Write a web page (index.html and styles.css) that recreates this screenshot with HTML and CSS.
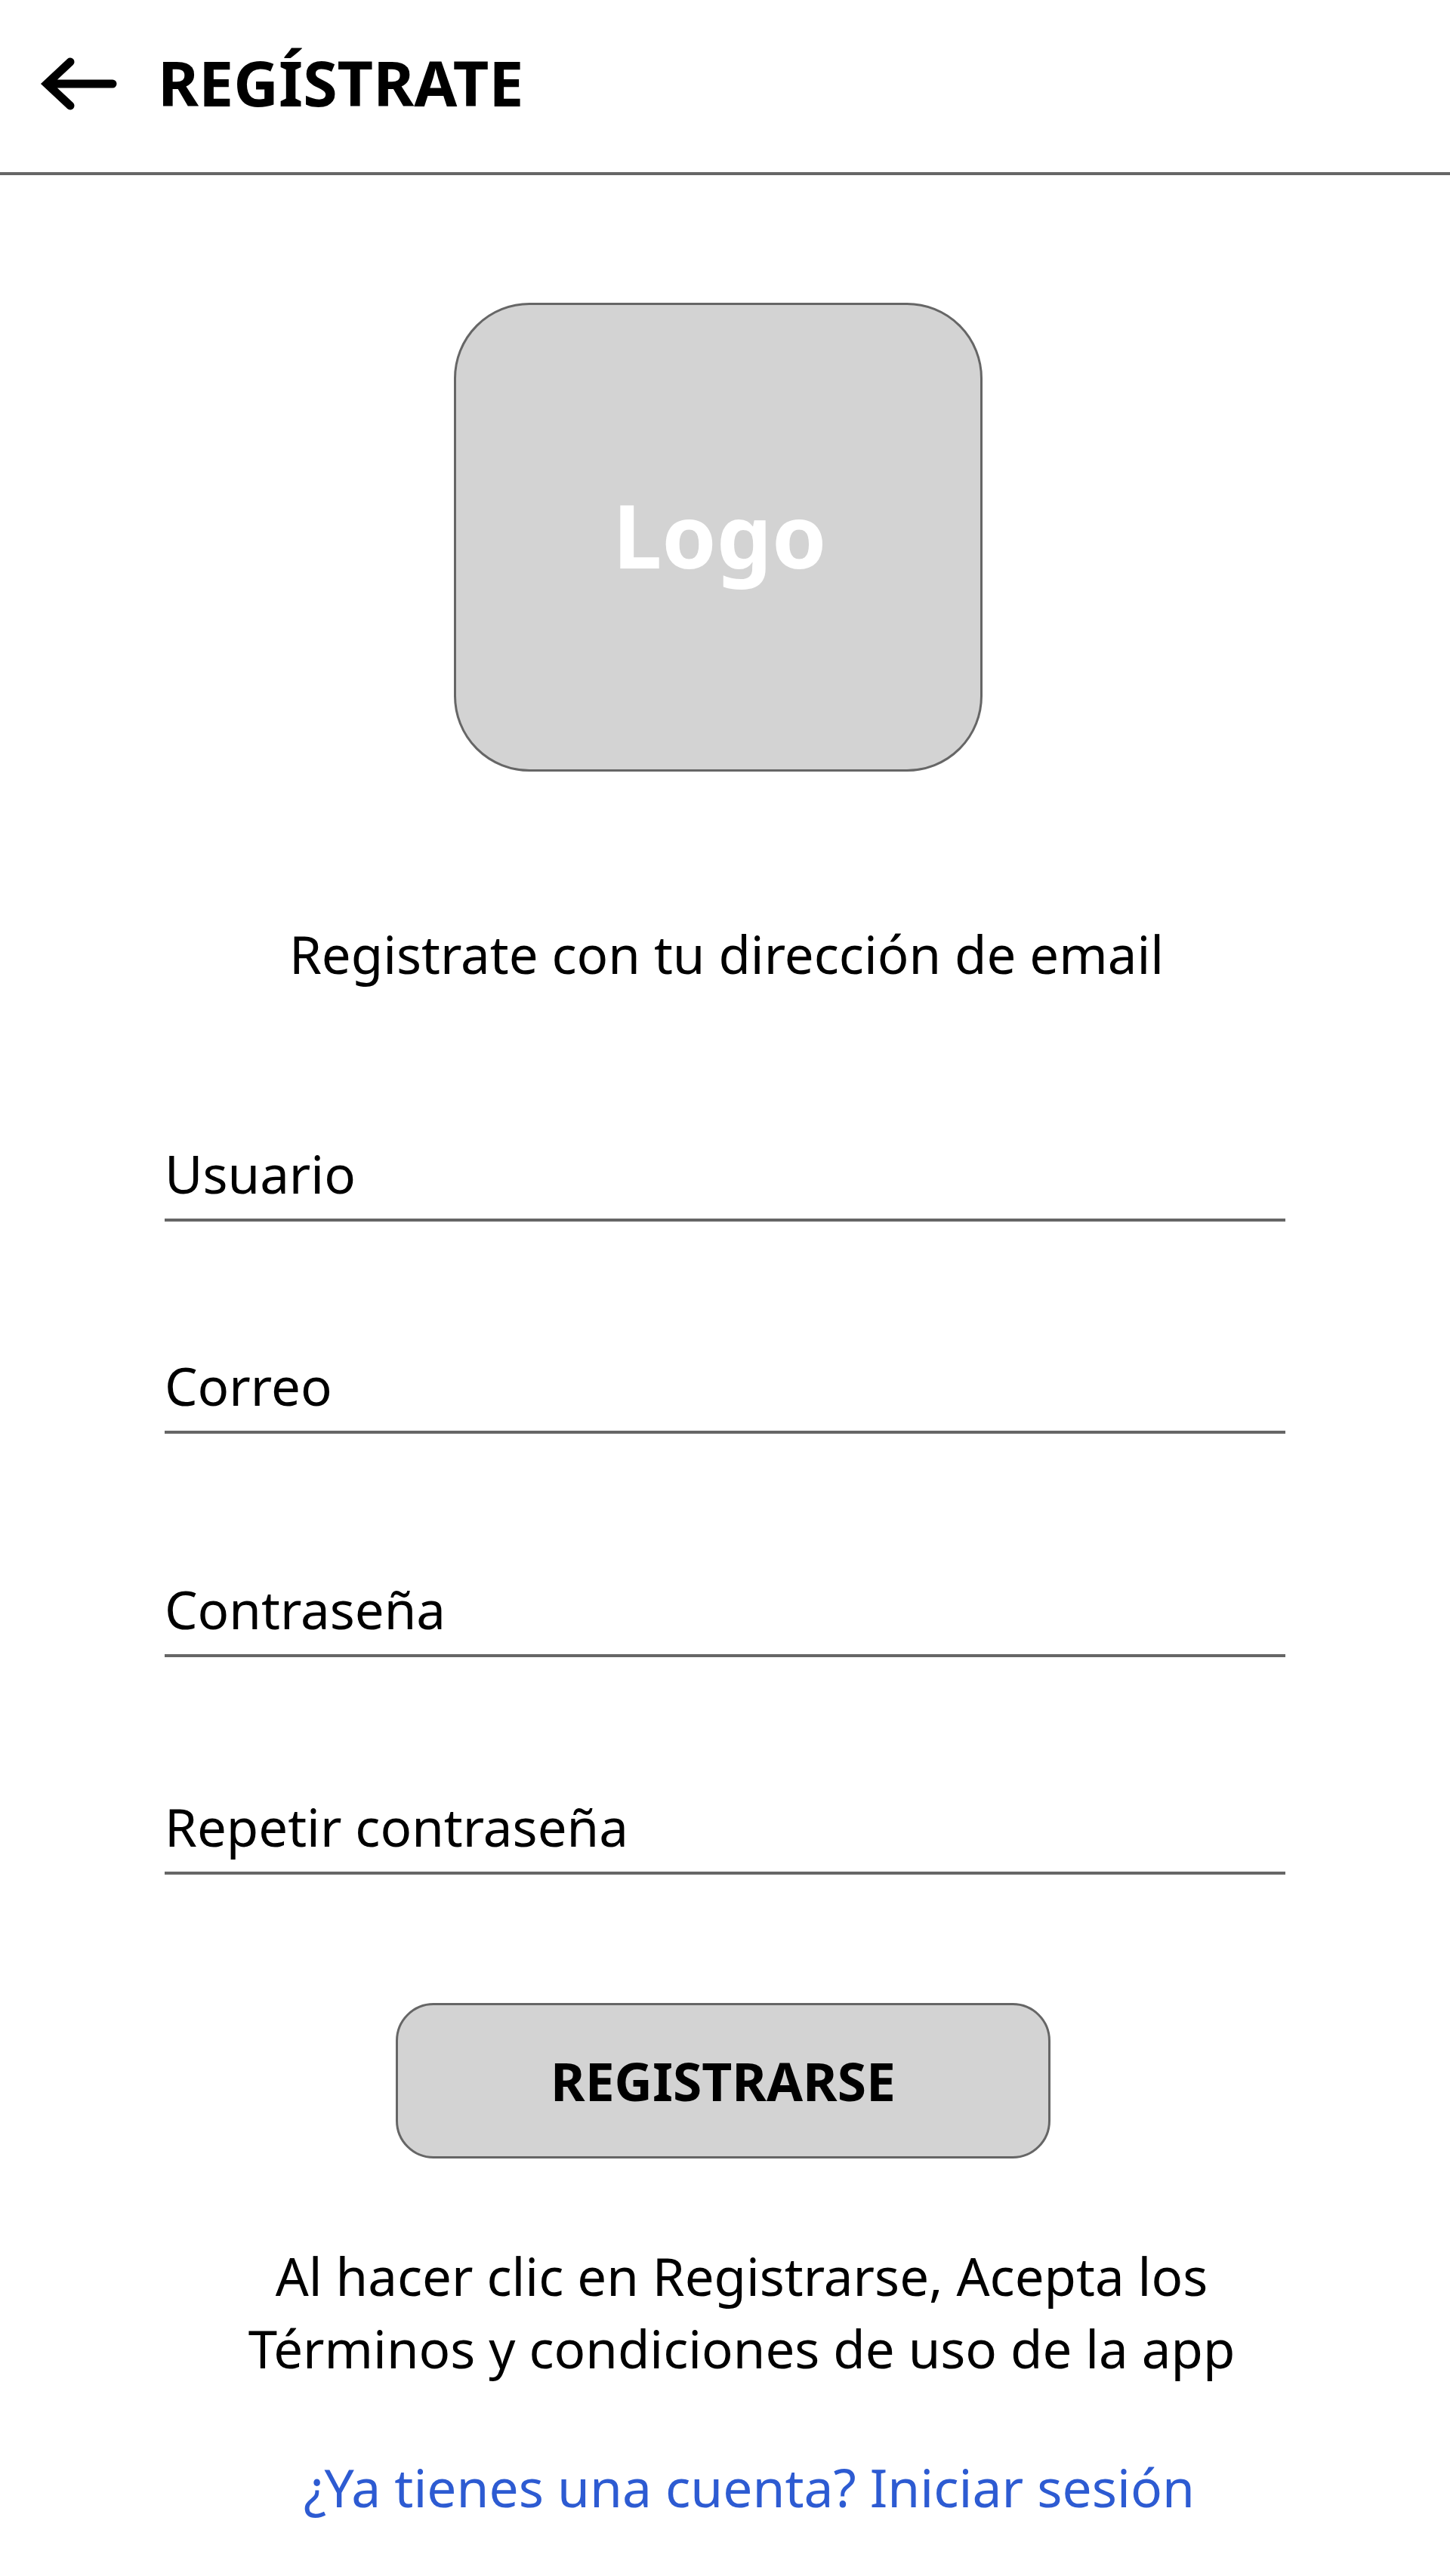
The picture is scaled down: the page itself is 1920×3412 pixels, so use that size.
FILE: index.html
```html
<!DOCTYPE html>
<html lang="es">
<head>
<meta charset="utf-8">
<title>Regístrate</title>
<link rel="stylesheet" href="styles.css">
</head>
<body>
<header class="topbar">
  <svg class="back" width="110" height="80" viewBox="0 0 110 80" aria-hidden="true">
    <path d="M101 40 H18 M45 11 L14 40 L45 69" fill="none" stroke="#000" stroke-width="11" stroke-linecap="round" stroke-linejoin="miter"/>
  </svg>
  <h1 class="title">REGÍSTRATE</h1>
</header>
<main class="page">
  <div class="logo"><span>Logo</span></div>
  <p class="intro">Registrate con tu dirección de email</p>
  <form class="form">
    <div class="field field-user"><span class="label">Usuario</span></div>
    <div class="field field-mail"><span class="label">Correo</span></div>
    <div class="field field-pass"><span class="label">Contraseña</span></div>
    <div class="field field-repeat"><span class="label">Repetir contraseña</span></div>
  </form>
  <div class="button">REGISTRARSE</div>
  <p class="terms">Al hacer clic en Registrarse, Acepta los<br>Términos y condiciones de uso de la app</p>
  <p class="login">¿Ya tienes una cuenta? Iniciar sesión</p>
</main>
</body>
</html>
```
FILE: styles.css
```css
html, body {
  margin: 0;
  padding: 0;
  background: #fff;
}
body {
  font-family: "Noto Sans", "Open Sans", sans-serif;
  color: #000;
  width: 1920px;
  min-height: 3412px;
}
.topbar {
  display: flex;
  align-items: flex-start;
  height: 228px;
  border-bottom: 4px solid #666;
  padding-left: 48px;
}
.back {
  margin-top: 71px;
  flex: none;
}
.title {
  margin: 67px 0 0 51px;
  font-size: 82.5px;
  line-height: 84px;
  font-weight: 700;
}
.page {
  display: flex;
  flex-direction: column;
  align-items: flex-start;
}
.logo {
  margin: 169px 0 0 601px;
  width: 694px;
  height: 615px;
  border: 3px solid #666;
  border-radius: 100px;
  background: #d3d3d3;
  display: flex;
  align-items: center;
  justify-content: center;
  box-sizing: content-box;
}
.logo span {
  color: #fff;
  font-weight: 700;
  font-size: 116px;
  line-height: 117px;
  padding: 0 0 6px 4px;
}
.intro {
  align-self: stretch;
  text-align: center;
  margin: 193px 0 0 4px;
  font-size: 69px;
  line-height: 96px;
}
.form {
  margin: 0 0 0 218px;
  width: 1484px;
  display: flex;
  flex-direction: column;
}
.field {
  border-bottom: 4px solid #666;
  padding-bottom: 11px;
}
.field-user { margin-top: 195px; }
.field-mail { margin-top: 169px; }
.field-pass { margin-top: 184px; }
.field-repeat { margin-top: 176px; }
.label {
  display: block;
  font-size: 69px;
  line-height: 97px;
}
.button {
  margin: 170px 0 0 524px;
  width: 861px;
  height: 200px;
  border: 3px solid #666;
  border-radius: 50px;
  background: #d3d3d3;
  display: flex;
  align-items: center;
  justify-content: center;
  font-weight: 700;
  font-size: 69.5px;
  line-height: 96px;
}
.terms {
  align-self: stretch;
  text-align: center;
  margin: 107px 0 0 44px;
  font-size: 69px;
  line-height: 96px;
}
.login {
  align-self: stretch;
  text-align: center;
  margin: 88px 0 0 64px;
  font-size: 69.5px;
  line-height: 96px;
  color: #2d5bd2;
}
```
